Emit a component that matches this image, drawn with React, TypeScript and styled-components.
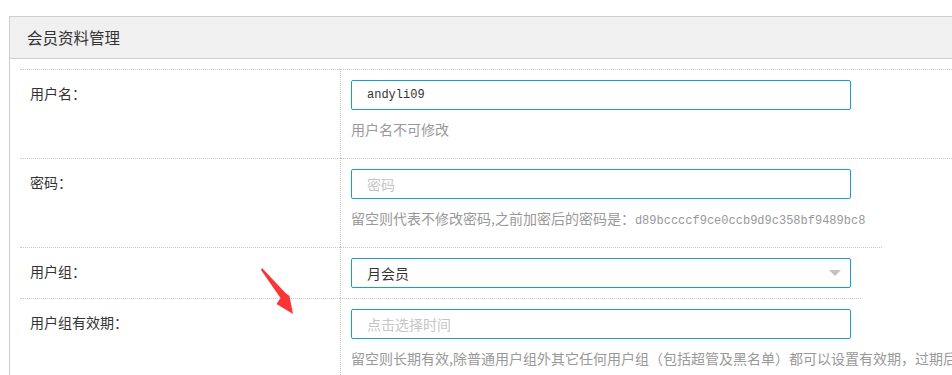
import React from 'react';
import styled, { createGlobalStyle } from 'styled-components';

const GlobalStyle = createGlobalStyle`
  html, body {
    margin: 0;
    padding: 0;
    background: #fff;
    overflow: hidden;
  }
  body {
    font-family: "Noto Sans CJK SC", "Liberation Sans", sans-serif;
    font-size: 14px;
    color: #333;
  }
`;

const Page = styled.div`
  position: relative;
  width: 952px;
  height: 375px;
  padding: 16px 0 0 9px;
  box-sizing: border-box;
`;

const Panel = styled.div`
  width: 1400px;
  border: 1px solid #cfcfcf;
  background: #fff;
`;

const PanelHeader = styled.div`
  height: 41px;
  line-height: 41px;
  padding-left: 17px;
  background: #f0f0f0;
  border-bottom: 1px solid #cfcfcf;
  font-size: 15.5px;
  color: #333;
`;

const PanelBody = styled.div`
  padding: 10px 10px 0;
`;

const FieldRow = styled.div`
  display: flex;
  align-items: stretch;
`;

const FieldLabel = styled.div`
  flex: none;
  width: 320px;
  box-sizing: border-box;
  padding: 13px 10px 0;
  line-height: 20px;
  border-top: 1px dotted #c8c8c8;
  color: #333;
`;

const FieldCell = styled.div<{ $width?: number }>`
  ${({ $width }) => ($width ? `flex: none; width: ${$width}px;` : 'flex: 1;')}
  box-sizing: border-box;
  padding: 10px;
  border-top: 1px dotted #c8c8c8;
  border-left: 1px dotted #c8c8c8;
`;

const TextInput = styled.input<{ $mono?: boolean }>`
  display: block;
  width: 500px;
  height: 30px;
  box-sizing: border-box;
  margin: 0;
  padding: 0 15px;
  border: 1px solid #1a9dc8;
  border-radius: 2px;
  outline: none;
  background: #fff;
  color: #333;
  font-family: ${({ $mono }) =>
    $mono ? '"Liberation Mono", monospace' : '"Noto Sans CJK SC", sans-serif'};
  font-size: ${({ $mono }) => ($mono ? '12px' : '14px')};

  &::placeholder {
    color: #c6c6c6;
  }
`;

const SelectBox = styled.div`
  display: flex;
  align-items: center;
  justify-content: space-between;
  width: 500px;
  height: 30px;
  box-sizing: border-box;
  padding: 0 9px 0 15px;
  border: 1px solid #1a9dc8;
  border-radius: 2px;
  background: #fff;
  color: #333;
  cursor: pointer;
`;

const Caret = styled.span`
  width: 0;
  height: 0;
  border-left: 6px solid transparent;
  border-right: 6px solid transparent;
  border-top: 6px solid #c2c2c2;
`;

const Hint = styled.div`
  height: 20px;
  margin: 9px 0;
  line-height: 20px;
  color: #999;
  white-space: nowrap;
`;

const Hash = styled.span`
  font-family: "Liberation Mono", monospace;
  font-size: 12px;
  line-height: 1;
`;

const Pointer = styled.svg`
  position: absolute;
  left: 255px;
  top: 262px;
  pointer-events: none;
`;

export default function App() {
  return (
    <>
      <GlobalStyle />
      <Page>
        <Panel>
          <PanelHeader>会员资料管理</PanelHeader>
          <PanelBody>
            <FieldRow>
              <FieldLabel>用户名：</FieldLabel>
              <FieldCell>
                <TextInput $mono value="andyli09" readOnly />
                <Hint>用户名不可修改</Hint>
              </FieldCell>
            </FieldRow>
            <FieldRow>
              <FieldLabel>密码：</FieldLabel>
              <FieldCell>
                <TextInput type="password" placeholder="密码" />
                <Hint>
                  留空则代表不修改密码,之前加密后的密码是：
                  <Hash>d89bccccf9ce0ccb9d9c358bf9489bc8</Hash>
                </Hint>
              </FieldCell>
            </FieldRow>
            <FieldRow>
              <FieldLabel>用户组：</FieldLabel>
              <FieldCell $width={542}>
                <SelectBox>
                  <span>月会员</span>
                  <Caret />
                </SelectBox>
              </FieldCell>
            </FieldRow>
            <FieldRow>
              <FieldLabel>用户组有效期：</FieldLabel>
              <FieldCell $width={521}>
                <TextInput placeholder="点击选择时间" readOnly />
                <Hint>
                  留空则长期有效,除普通用户组外其它任何用户组（包括超管及黑名单）都可以设置有效期，过期后将自动变更为普通用户组
                </Hint>
              </FieldCell>
            </FieldRow>
          </PanelBody>
        </Panel>
        <Pointer width="45" height="56" viewBox="255 262 45 56">
          <polygon
            points="262,268 285.5,293 289.5,296 293,314 276.5,304 280.5,298 261,270"
            fill="#fb3535"
          />
        </Pointer>
      </Page>
    </>
  );
}
